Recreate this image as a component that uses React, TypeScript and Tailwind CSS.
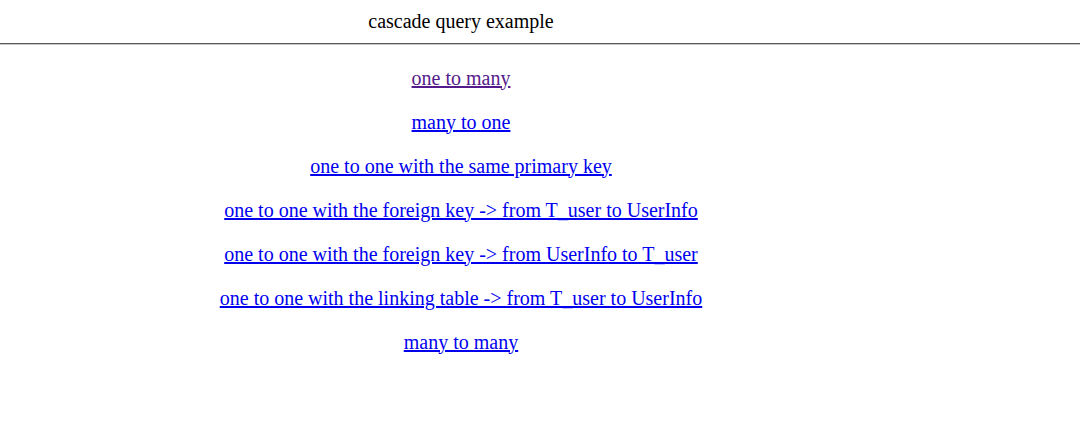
const links = [
  { text: 'one to many', visited: true },
  { text: 'many to one' },
  { text: 'one to one with the same primary key' },
  { text: 'one to one with the foreign key -> from T_user to UserInfo' },
  { text: 'one to one with the foreign key -> from UserInfo to T_user' },
  { text: 'one to one with the linking table -> from T_user to UserInfo' },
  { text: 'many to many' },
];

const App = () => {
  return (
    <div className="w-[1080px] h-[441px] bg-white font-['Liberation_Serif','Times_New_Roman',serif] text-[20px] text-black">
      {/* Title */}
      <div className="w-[922px] h-[43px] pb-[2px] flex items-center justify-center">
        <span>cascade query example</span>
      </div>
      {/* Rule */}
      <div className="w-full border-t border-[#5a5a5a]" />
      <div className="w-full border-t border-[#c8c8c8]" />

      {/* Link list */}
      <div className="w-[922px] pt-[11px] flex flex-col items-center">
        {links.map((l) => (
          <div key={l.text} className="h-[44px] flex items-center">
            <a
              href="#"
              className={
                l.visited
                  ? 'underline text-[#551a8b] leading-[23px]'
                  : 'underline text-[#0000ee] leading-[23px]'
              }
            >
              {l.text}
            </a>
          </div>
        ))}
      </div>
    </div>
  );
};

export default App;
